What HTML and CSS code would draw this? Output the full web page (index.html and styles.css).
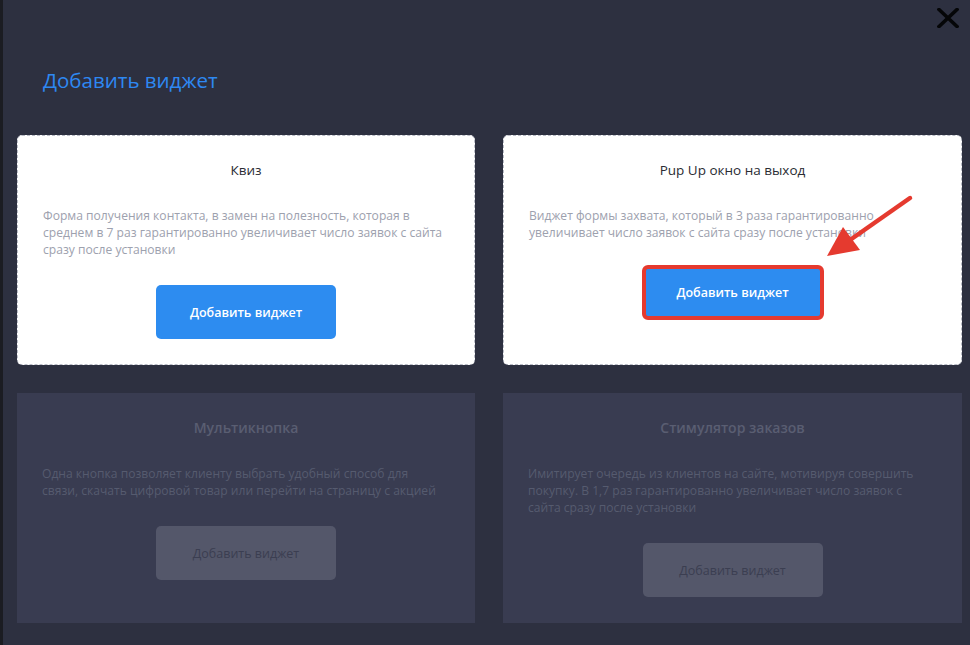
FILE: index.html
```html
<!DOCTYPE html>
<html lang="ru">
<head>
<meta charset="utf-8">
<title>Добавить виджет</title>
<link rel="stylesheet" href="styles.css">
</head>
<body>
<div class="modal">
  <button class="close" aria-label="Закрыть">
    <svg width="22" height="20" viewBox="0 0 22 20"><path d="M2 1.5 L20 18.5 M20 1.5 L2 18.5" stroke="#050608" stroke-width="3.6" stroke-linecap="square"/></svg>
  </button>
  <h1 class="title">Добавить виджет</h1>
  <div class="grid">
    <div class="card">
      <div class="card-title">Квиз</div>
      <p class="card-desc">Форма получения контакта, в замен на полезность, которая в среднем в 7 раз гарантированно увеличивает число заявок с сайта сразу после установки</p>
      <button class="btn">Добавить виджет</button>
    </div>
    <div class="card">
      <div class="card-title">Pup Up окно на выход</div>
      <p class="card-desc">Виджет формы захвата, который в 3 раза гарантированно увеличивает число заявок с сайта сразу после установки</p>
      <button class="btn btn-marked">Добавить виджет</button>
    </div>
    <div class="card card-disabled">
      <div class="card-title">Мультикнопка</div>
      <p class="card-desc">Одна кнопка позволяет клиенту выбрать удобный способ для связи, скачать цифровой товар или перейти на страницу с акцией</p>
      <button class="btn">Добавить виджет</button>
    </div>
    <div class="card card-disabled">
      <div class="card-title">Стимулятор заказов</div>
      <p class="card-desc">Имитирует очередь из клиентов на сайте, мотивируя совершить покупку. В 1,7 раз гарантированно увеличивает число заявок с сайта сразу после установки</p>
      <button class="btn">Добавить виджет</button>
    </div>
  </div>
  <svg class="arrow" width="970" height="645" viewBox="0 0 970 645">
    <path d="M910 198 L850 240" stroke="#e53a2f" stroke-width="4.5" stroke-linecap="round"/>
    <polygon points="827,256 843,227 860,250" fill="#e53a2f"/>
  </svg>
</div>
</body>
</html>
```

FILE: styles.css
```css
* { box-sizing: border-box; }
html, body { margin: 0; padding: 0; }
body {
  background: #2d3040;
  font-family: "Open Sans", "Noto Sans", sans-serif;
  width: 970px;
  height: 645px;
  overflow: hidden;
}
.modal {
  height: 645px;
  border-left: 3px solid #1b1c22;
  padding: 67px 8px 0 14px;
}
.close {
  position: absolute;
  top: 8px;
  right: 11px;
  width: 22px;
  height: 20px;
  padding: 0;
  border: 0;
  background: none;
  display: flex;
}
.title {
  margin: 0 0 0 26px;
  font-size: 20.5px;
  line-height: 27px;
  font-weight: 400;
  color: #2e88f2;
}
.grid {
  margin-top: 41px;
  display: grid;
  grid-template-columns: 458px 459px;
  grid-auto-rows: 230px;
  column-gap: 28px;
  row-gap: 28px;
}
.card {
  background: #fff;
  border: 1px dashed #b9bcc6;
  border-radius: 5px;
  padding: 24px 25px 0;
  display: flex;
  flex-direction: column;
  align-items: center;
}
.card-title {
  font-size: 13.5px;
  line-height: 20px;
  color: #2a2c33;
  font-weight: 400;
}
.card-desc {
  align-self: stretch;
  margin: 27px 3px 0 0;
  font-size: 12.1px;
  line-height: 17px;
  color: #9da1ae;
}
.btn {
  margin-top: 27px;
  width: 180px;
  height: 54px;
  border: 0;
  border-radius: 5px;
  background: #2d8cf0;
  color: #fff;
  font-family: inherit;
  font-size: 12.5px;
  font-weight: 600;
}
.btn-marked {
  margin-top: 24px;
  width: 182px;
  height: 55px;
  border: 4px solid #e53a2f;
  border-radius: 6px;
}
.card-disabled {
  background: #393c51;
  border: 0;
  border-radius: 0;
  padding-top: 25px;
}
.card-disabled .card-title {
  font-size: 14px;
  color: #5a5e72;
  font-weight: 600;
}
.card-disabled .card-desc {
  color: #565b6f;
}
.card-disabled .btn {
  background: #54576a;
  color: #3b3e51;
  font-weight: 400;
}
.arrow {
  position: absolute;
  top: 0;
  left: 0;
  pointer-events: none;
}
```
